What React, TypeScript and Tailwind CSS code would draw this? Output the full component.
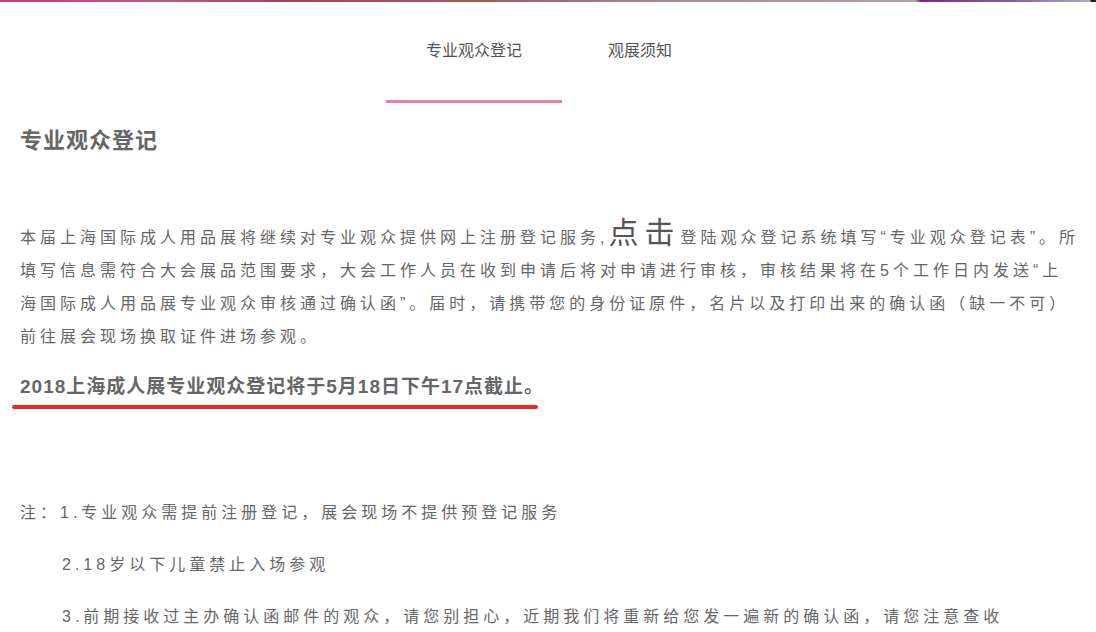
import { ReactNode } from "react";

const font = "font-['Liberation_Sans','Noto_Sans_CJK_SC',sans-serif]";

function Tab({ label, active, width }: { label: string; active?: boolean; width: string }) {
  return (
    <div
      className={`${width} h-full flex items-center justify-center text-[16px] text-[#555] border-b-[3px] ${
        active ? "border-[#f27a9e]" : "border-transparent"
      }`}
    >
      {label}
    </div>
  );
}

function Note({ children, indent }: { children: ReactNode; indent?: boolean }) {
  return <p className={`leading-[52px] ${indent ? "pl-[42px]" : ""}`}>{children}</p>;
}

export default function App() {
  return (
    <div className={`min-h-[632px] bg-white ${font}`}>
      <div className="h-[2px] bg-[linear-gradient(90deg,#c63c7c_0%,#c2568a_15%,#a84058_26%,#a85a64_45%,#a88c94_62%,#b0a4a4_83.5%,#7c2684_84%,#8a5a9c_92%,#a8b0d0_99.4%,#2a1a22_99.6%)]" />

      <nav className="h-[101px] flex pl-[386px]">
        <Tab label="专业观众登记" active width="w-[176px]" />
        <Tab label="观展须知" width="w-[156px]" />
      </nav>

      <main className="pl-[20px] pr-[14px]">
        <h1 className="mt-[23px] text-[22px] leading-[30px] font-bold text-[#666] tracking-[1px]">
          专业观众登记
        </h1>

        <p className="mt-[65px] text-[16px] leading-[33px] tracking-[4px] text-[#666]">
          本届上海国际成人用品展将继续对专业观众提供网上注册登记服务,
          <span className="text-[30px] leading-[20px] tracking-[6px] text-[#555]">点击</span>
          登陆观众登记系统填写“专业观众登记表”。所填写信息需符合大会展品范围要求，大会工作人员在收到申请后将对申请进行审核，审核结果将在5个工作日内发送“上海国际成人用品展专业观众审核通过确认函”。届时，请携带您的身份证原件，名片以及打印出来的确认函（缺一不可）前往展会现场换取证件进场参观。
        </p>

        <p className="mt-[20px] text-[19px] leading-[28px] font-bold tracking-[1px] text-[#666]">
          2018上海成人展专业观众登记将于5月18日下午17点截止。
        </p>
        <div className="mt-[4px] -ml-[8px] h-[4px] w-[526px] rounded-full bg-[#f0281e]" />

        <div className="mt-[78px] text-[16px] tracking-[4px] text-[#666]">
          <Note>注：1.专业观众需提前注册登记，展会现场不提供预登记服务</Note>
          <Note indent>2.18岁以下儿童禁止入场参观</Note>
          <Note indent>3.前期接收过主办确认函邮件的观众，请您别担心，近期我们将重新给您发一遍新的确认函，请您注意查收</Note>
        </div>
      </main>
    </div>
  );
}
